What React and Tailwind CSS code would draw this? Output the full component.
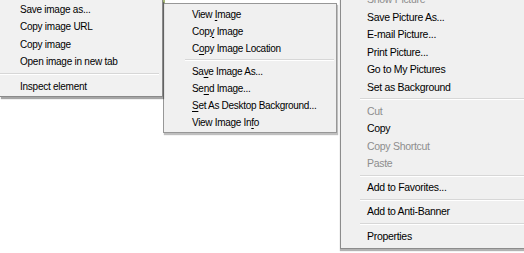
import React from "react";

const Sep = ({ className, h = "h-[6px]" }) => (
  <div className={`${h} flex flex-col justify-center ${className}`}>
    <div className="h-px bg-[#d7d7d7]" />
    <div className="h-px bg-white" />
  </div>
);

const Item = ({ children, dim, pad, h }) => (
  <div className={`${h} whitespace-nowrap ${pad} ${dim ? "text-[#8d8d8d]" : "text-black"}`}>
    {children}
  </div>
);

const U = ({ children }) => <span className="underline underline-offset-2">{children}</span>;

const App = () => {
  return (
    <div className="w-[524px] h-[253px] bg-white overflow-hidden flex items-start font-['Liberation_Sans',sans-serif] relative">
      {/* Chrome menu */}
      <div className="relative w-[163px] bg-[#f1f1f1] border-r border-b border-[#8a8a8a] shadow-[1px_2px_1px_rgba(0,0,0,0.35)] pt-[1px] pb-[1px] text-[10px] tracking-[-0.25px]">
        <Item h="h-[17.3px] leading-[17.3px]" pad="pl-[20px]">Save image as...</Item>
        <Item h="h-[17.3px] leading-[17.3px]" pad="pl-[20px]">Copy image URL</Item>
        <Item h="h-[17.3px] leading-[17.3px]" pad="pl-[20px]">Copy image</Item>
        <Item h="h-[17.3px] leading-[17.3px]" pad="pl-[20px]">Open image in new tab</Item>
        <Sep h="h-[8px]" className="pr-[3px]" />
        <Item h="h-[17.3px] leading-[17.3px]" pad="pl-[20px]">Inspect element</Item>
      </div>
      <div className="w-[2px] h-[100px] bg-[#a9b97a]" />

      {/* Firefox menu */}
      <div className="-ml-[2px] mt-[3px] w-[174px] bg-[#f0f0f0] border border-[#979797] shadow-[1px_2px_1px_rgba(0,0,0,0.25)] pt-[1.5px] pb-[1px] text-[10px] tracking-[-0.3px]">
        <Item h="h-[17px] leading-[17px]" pad="pl-[28px]">View <U>I</U>mage</Item>
        <Item h="h-[17px] leading-[17px]" pad="pl-[28px]">Cop<U>y</U> Image</Item>
        <Item h="h-[17px] leading-[17px]" pad="pl-[28px]">C<U>o</U>py Image Location</Item>
        <Sep className="ml-[21px] mr-[2px]" />
        <Item h="h-[17px] leading-[17px]" pad="pl-[28px]">Sa<U>v</U>e Image As...</Item>
        <Item h="h-[17px] leading-[17px]" pad="pl-[28px]">Se<U>n</U>d Image...</Item>
        <Item h="h-[17px] leading-[17px]" pad="pl-[28px]"><U>S</U>et As Desktop Background...</Item>
        <Item h="h-[17px] leading-[17px]" pad="pl-[28px]">View Image In<U>f</U>o</Item>
      </div>

      {/* IE menu */}
      <div className="ml-[3px] -mt-[11px] w-[184px] bg-[#f0f0f0] border-l border-b border-[#8c8c8c] shadow-[0_2px_1px_rgba(0,0,0,0.3)] pt-[2px] pb-[3px] text-[10.5px] tracking-[-0.3px]">
        <Item h="h-[17.5px] leading-[17.5px]" pad="pl-[26px]" dim>Show Picture</Item>
        <Item h="h-[17.5px] leading-[17.5px]" pad="pl-[26px]">Save Picture As...</Item>
        <Item h="h-[17.5px] leading-[17.5px]" pad="pl-[26px]">E-mail Picture...</Item>
        <Item h="h-[17.5px] leading-[17.5px]" pad="pl-[26px]">Print Picture...</Item>
        <Item h="h-[17.5px] leading-[17.5px]" pad="pl-[26px]">Go to My Pictures</Item>
        <Item h="h-[17.5px] leading-[17.5px]" pad="pl-[26px]">Set as Background</Item>
        <Sep h="h-[6.5px]" className="ml-[19px]" />
        <Item h="h-[17.5px] leading-[17.5px]" pad="pl-[26px]" dim>Cut</Item>
        <Item h="h-[17.5px] leading-[17.5px]" pad="pl-[26px]">Copy</Item>
        <Item h="h-[17.5px] leading-[17.5px]" pad="pl-[26px]" dim>Copy Shortcut</Item>
        <Item h="h-[17.5px] leading-[17.5px]" pad="pl-[26px]" dim>Paste</Item>
        <Sep h="h-[6.5px]" className="ml-[19px]" />
        <Item h="h-[17.5px] leading-[17.5px]" pad="pl-[26px]">Add to Favorites...</Item>
        <Sep h="h-[6.5px]" className="ml-[19px]" />
        <Item h="h-[17.5px] leading-[17.5px]" pad="pl-[26px]">Add to Anti-Banner</Item>
        <Sep h="h-[7px]" className="ml-[19px]" />
        <Item h="h-[17.5px] leading-[17.5px]" pad="pl-[26px]">Properties</Item>
      </div>
    </div>
  );
};

export default App;
